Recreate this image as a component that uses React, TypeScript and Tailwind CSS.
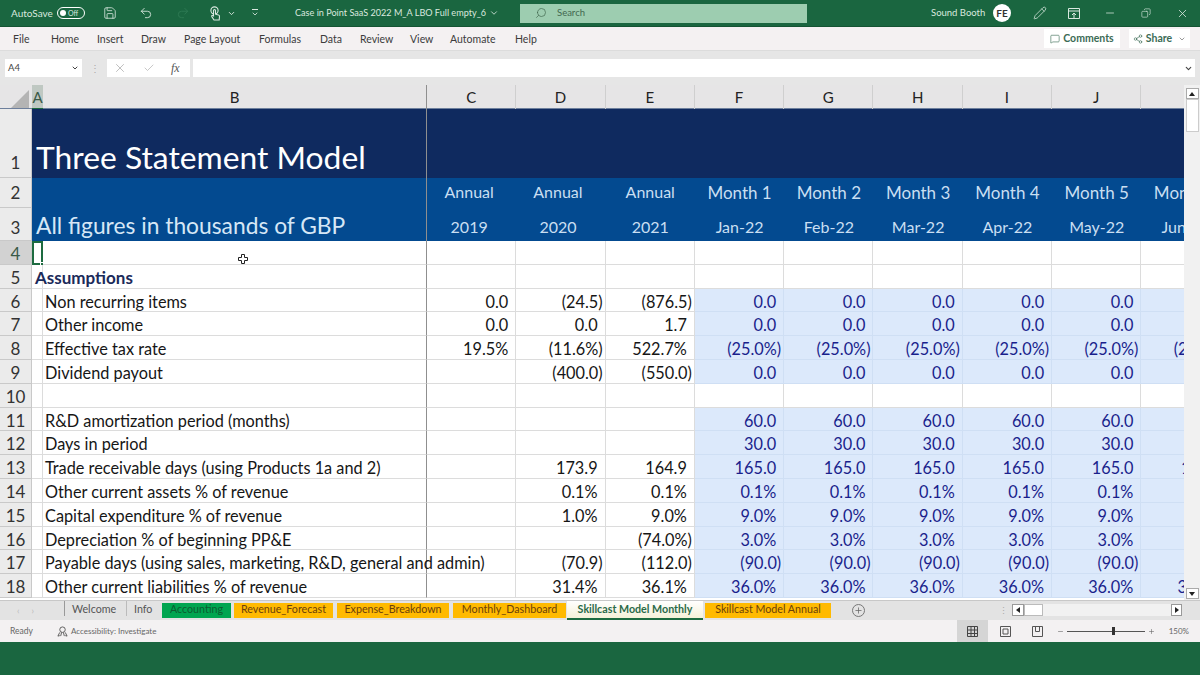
import { ChevronDown, Minus, Plus, Search, Undo2, Redo2, Save, X, Check, Pencil, MessageSquare, Share2, Copy } from "lucide-react";

const font = "font-['Lato','Liberation_Sans',sans-serif]";
const colCls = "grid grid-cols-[32px_11px_384px_repeat(9,89.3px)]";

type RowData = { n: number; label?: string; bold?: boolean; c?: string; d?: string; e?: string; inputs?: string };

const rows: RowData[] = [
  { n: 4 },
  { n: 5, label: "Assumptions", bold: true },
  { n: 6, label: "Non recurring items", c: "0.0", d: "(24.5)", e: "(876.5)", inputs: "0.0" },
  { n: 7, label: "Other income", c: "0.0", d: "0.0", e: "1.7", inputs: "0.0" },
  { n: 8, label: "Effective tax rate", c: "19.5%", d: "(11.6%)", e: "522.7%", inputs: "(25.0%)" },
  { n: 9, label: "Dividend payout", d: "(400.0)", e: "(550.0)", inputs: "0.0" },
  { n: 10 },
  { n: 11, label: "R&D amortization period (months)", inputs: "60.0" },
  { n: 12, label: "Days in period", inputs: "30.0" },
  { n: 13, label: "Trade receivable days (using Products 1a and 2)", d: "173.9", e: "164.9", inputs: "165.0" },
  { n: 14, label: "Other current assets % of revenue", d: "0.1%", e: "0.1%", inputs: "0.1%" },
  { n: 15, label: "Capital expenditure % of revenue", d: "1.0%", e: "9.0%", inputs: "9.0%" },
  { n: 16, label: "Depreciation % of beginning PP&E", e: "(74.0%)", inputs: "3.0%" },
  { n: 17, label: "Payable days (using sales, marketing, R&D, general and admin)", d: "(70.9)", e: "(112.0)", inputs: "(90.0)" },
  { n: 18, label: "Other current liabilities % of revenue", d: "31.4%", e: "36.1%", inputs: "36.0%" },
];

const headCols = ["C", "D", "E", "F", "G", "H", "I", "J"];
const months = ["Month 1", "Month 2", "Month 3", "Month 4", "Month 5", "Month 6"];
const dates = ["Jan-22", "Feb-22", "Mar-22", "Apr-22", "May-22", "Jun-22"];
const annual = [
  { label: "Annual", year: "2019", cls: "pr-[5px]" },
  { label: "Annual", year: "2020", cls: "pr-[6px]" },
  { label: "Annual", year: "2021", cls: "" },
];
const tabs = [
  { name: "Accounting", cls: "bg-[#00a550] text-[#0c5c30] w-[69px]" },
  { name: "Revenue_Forecast", cls: "bg-[#ffba00] text-[#6b3f0a] w-[99px]" },
  { name: "Expense_Breakdown", cls: "bg-[#ffba00] text-[#6b3f0a] w-[112px] ml-px" },
  { name: "Monthly_Dashboard", cls: "bg-[#ffba00] text-[#6b3f0a] w-[113px] ml-px" },
];

function Val({ v }: { v?: string }) {
  if (!v) return null;
  const paren = v.endsWith(")");
  return <span className={paren ? "pr-[2px]" : "pr-[7px]"}>{v}</span>;
}

function Row({ r }: { r: RowData }) {
  const selected = r.n === 4;
  return (
    <div className={`${colCls} h-[23.8px] text-[16.3px] leading-[19.8px] text-[#161616] [&>div]:pt-[3px]`}>
      <div className={`border-r border-b border-[#c9c9c9] text-center text-[17px] ${selected ? "bg-[#d2d2d2] text-[#3a5a48]" : "bg-[#ebebeb] text-[#333]"}`}>{r.n}</div>
      <div className={`relative whitespace-nowrap ${selected ? "border-2 border-[#1d6b40]" : "border-b border-r border-[#dcdcdc]"}`}>
        {r.bold && <span className="block pl-[3px] text-[17px] font-bold text-[#1b2a5a]">{r.label}</span>}
        {selected && <div className="absolute -right-[3px] -bottom-[3px] w-[4px] h-[4px] bg-[#1d6b40] border border-white" />}
      </div>
      <div className="relative border-b border-r border-b-[#dcdcdc] border-r-[#8f8f8f] whitespace-nowrap pl-[2px]">
        {!r.bold && r.label}
        {selected && (
          <svg className="absolute left-[195px] top-[13px] w-[10px] h-[10px]" viewBox="0 0 10 10">
            <path d="M3.5.5h3v3h3v3h-3v3h-3v-3h-3v-3h3z" fill="#fff" stroke="#222" />
          </svg>
        )}
      </div>
      {[r.c, r.d, r.e].map((v, i) => (
        <div key={i} className="border-b border-r border-[#dcdcdc] text-right"><Val v={v} /></div>
      ))}
      {["F", "G", "H", "I", "J", "K"].map((c) => (
        <div key={c} className={`text-right text-[#1a1f8c] ${r.inputs ? "bg-[#dce9fb] border-b border-r border-[#cfdff4]" : "border-b border-r border-[#dcdcdc]"}`}>
          <Val v={r.inputs} />
        </div>
      ))}
    </div>
  );
}

export default function App() {
  return (
    <div className={`${font} w-[1200px] h-[675px] overflow-hidden flex flex-col bg-[#1a6640]`}>
      {/* title bar */}
      <div className="h-[27px] flex items-center bg-[#1a6640] text-[#d9e8df] text-[9.5px] border-b border-[#145433]">
        <span className="ml-[11px] w-[41px] text-[10px] whitespace-nowrap">AutoSave</span>
        <div className="ml-[5px] w-[28px] h-[12px] rounded-full border border-white flex items-center pl-[2px] gap-[2px] text-[7px]">
          <span className="w-[6px] h-[6px] rounded-full bg-white" />Off
        </div>
        <Save className="ml-[18px] w-[14px] h-[14px]" strokeWidth={1.4} />
        <Undo2 className="ml-[22px] w-[14px] h-[14px]" strokeWidth={1.5} />
        <Redo2 className="ml-[23px] w-[14px] h-[14px] text-[#2f7a53]" strokeWidth={1.5} />
        <svg className="ml-[19px] w-[13px] h-[15px]" viewBox="0 0 13 15" fill="none" stroke="currentColor" strokeWidth="1.1">
          <circle cx="5.5" cy="4.5" r="3.6" />
          <path d="M4.5 4.5a1 1 0 0 1 2 0v3.7l3 .8a1.4 1.4 0 0 1 1 1.5l-.3 3.5H5l-2.2-3.4c-.5-.9.6-1.6 1.7-.7z" fill="#1a6640" />
        </svg>
        <ChevronDown className="ml-[5px] w-[9px] h-[9px]" strokeWidth={2.5} />
        <div className="ml-[14px] w-[9px] flex flex-col items-center gap-[1px]">
          <div className="w-[6px] h-px bg-[#d9e8df]" />
          <ChevronDown className="-my-[1px] w-[8px] h-[8px]" strokeWidth={2.5} />
        </div>
        <span className="ml-[36px] w-[192px] text-[9.1px] whitespace-nowrap">Case in Point SaaS 2022 M_A LBO Full empty_6</span>
        <ChevronDown className="ml-[2px] w-[10px] h-[10px]" />
        <div className="ml-[21px] w-[287px] h-[19px] bg-[#9dcdb0] text-[#42684f] flex items-center pl-[15px] gap-[10px]">
          <Search className="w-[12px] h-[12px] -scale-x-100" strokeWidth={1.4} />
          <span>Search</span>
        </div>
        <span className="ml-[124px] w-[54px] whitespace-nowrap">Sound Booth</span>
        <div className="ml-[8px] w-[18px] h-[18px] rounded-full bg-white text-[#333] text-[10px] flex items-center justify-center font-bold">FE</div>
        <Pencil className="ml-[22px] w-[14px] h-[14px]" strokeWidth={1.3} />
        <svg className="ml-[21px] w-[12px] h-[11px]" viewBox="0 0 12 11" fill="none" stroke="currentColor">
          <path d="M.5.5h11v10H.5zM.5 3h11M6 10V5M4 7l2-2 2 2" />
        </svg>
        <Minus className="ml-[24px] w-[12px] h-[12px]" strokeWidth={1.5} />
        <Copy className="ml-[25px] w-[10px] h-[10px] -scale-x-100" strokeWidth={1.5} />
        <X className="ml-[25px] w-[13px] h-[13px]" strokeWidth={1.5} />
      </div>

      {/* ribbon tabs */}
      <div className="h-[24px] flex items-center bg-[#f4f1f2] text-[#3c3c3c] text-[10.5px] border-b border-[#dcdcdc] whitespace-nowrap [&>span]:mt-[2px]">
        <span className="ml-[13px] w-[38px]">File</span>
        <span className="w-[46px]">Home</span>
        <span className="w-[44px]">Insert</span>
        <span className="w-[43px]">Draw</span>
        <span className="w-[75px]">Page Layout</span>
        <span className="w-[61px]">Formulas</span>
        <span className="w-[40px]">Data</span>
        <span className="w-[50px]">Review</span>
        <span className="w-[40px]">View</span>
        <span className="w-[65px]">Automate</span>
        <span>Help</span>
        <div className="ml-auto mr-[10px] flex items-center gap-[9px] font-bold text-[#3b6b55]">
          <div className="w-[76px] h-[19px] bg-white flex items-center justify-center gap-[3px]">
            <MessageSquare className="w-[10px] h-[10px]" strokeWidth={1.5} />Comments
          </div>
          <div className="w-[61px] h-[19px] bg-white flex items-center justify-center gap-[3px]">
            <Share2 className="w-[10px] h-[10px]" strokeWidth={1.5} />Share
            <ChevronDown className="ml-[3px] w-[8px] h-[8px] text-[#666]" />
          </div>
        </div>
      </div>

      {/* formula bar */}
      <div className="h-[34px] flex items-center bg-[#e6e6e6] text-[#444] pl-[5px] pr-[5px]">
        <div className="w-[77px] h-[18px] bg-white flex items-center justify-between px-[3px] text-[9.5px]">
          A4<ChevronDown className="w-[8px] h-[8px]" strokeWidth={3} />
        </div>
        <span className="w-[25px] text-center text-[#aaa] text-[10px]">⋮</span>
        <div className="w-[83px] h-[18px] bg-white flex items-center gap-[16px] pl-[6px] text-[#aaa]">
          <X className="w-[14px] h-[14px]" strokeWidth={1.3} />
          <Check className="w-[12px] h-[12px]" strokeWidth={1.3} />
          <span className="text-[#555] italic text-[12px] font-['Liberation_Serif',serif]">fx</span>
        </div>
        <div className="ml-[3px] flex-1 h-[18px] bg-white flex items-center justify-end pr-[2px]">
          <ChevronDown className="w-[9px] h-[9px]" strokeWidth={3} />
        </div>
      </div>

      {/* sheet */}
      <div className="h-[515px] bg-white flex">
        <div className="w-[1184px] overflow-hidden">
          <div className={`${colCls} h-[23px] bg-[#e6e5e6] text-[15px] leading-[22px] text-[#222] text-center [&>div]:pt-[1px]`}>
            <div className="flex items-end justify-end pr-[3px] pb-[2px]">
              <div className="w-[18px] h-[18px] bg-[#b4b4b4] [clip-path:polygon(100%_0,100%_100%,0_100%)]" />
            </div>
            <div className="bg-[#bfc8c2] border-b-2 border-[#1d6b40] text-[#3a5a48]">A</div>
            <div className="border-r border-[#8f8f8f]">B</div>
            {headCols.map((c) => (
              <div key={c} className="border-r border-[#cfcfcf]">{c}</div>
            ))}
            <div className="border-r border-[#cfcfcf]" />
          </div>

          <div className={`${colCls} h-[70px] border-t border-[#6d7f9c]`}>
            <div className="bg-[#ebebeb] border-r border-b border-[#c9c9c9] text-center text-[17px] text-[#333] flex items-end justify-center pb-[2px]">1</div>
            <div className="col-span-2 bg-[#0f2a5f] border-r border-[#8f8f8f] text-white text-[31.8px] leading-[32px] whitespace-nowrap pl-[4px] pb-[5px] flex items-end">Three Statement Model</div>
            <div className="col-span-9 bg-[#0f2a5f]" />
          </div>

          <div className={`${colCls} h-[30px]`}>
            <div className="bg-[#ebebeb] border-r border-b border-[#c9c9c9] text-center text-[17px] leading-[29px] text-[#333]">2</div>
            <div className="col-span-2 bg-[#034a90] border-r border-[#8f8f8f]" />
            {annual.map((a) => (
              <div key={a.year} className={`bg-[#034a90] text-[#c9dff2] text-[16px] leading-[28px] text-center whitespace-nowrap ${a.cls}`}>{a.label}</div>
            ))}
            {months.map((m) => (
              <div key={m} className="bg-[#034a90] text-[#c9dff2] text-[17px] leading-[29px] text-center whitespace-nowrap">{m}</div>
            ))}
          </div>

          <div className={`${colCls} h-[33px]`}>
            <div className="bg-[#ebebeb] border-r border-b border-[#c9c9c9] text-center text-[17px] leading-[25px] pt-[7px] text-[#333]">3</div>
            <div className="col-span-2 bg-[#034a90] border-r border-[#8f8f8f] text-[#d6e7f6] text-[22.8px] leading-[32px] pt-px whitespace-nowrap pl-[4px]">All figures in thousands of GBP</div>
            {annual.map((a) => (
              <div key={a.year} className={`bg-[#034a90] text-[#c9dff2] text-[16px] leading-[28px] pt-[5px] text-center whitespace-nowrap ${a.cls}`}>{a.year}</div>
            ))}
            {dates.map((m) => (
              <div key={m} className="bg-[#034a90] text-[#c9dff2] text-[16px] leading-[28px] pt-[5px] text-center whitespace-nowrap">{m}</div>
            ))}
          </div>

          {rows.map((r) => <Row key={r.n} r={r} />)}
        </div>

        {/* vertical scrollbar */}
        <div className="w-[16px] bg-[#f1f1f1] flex flex-col items-center pt-[3px] pb-[1px]">
          <div className="w-[13px] h-[11px] bg-white border border-[#aaa] flex items-center justify-center">
            <div className="w-0 h-0 border-x-[3px] border-x-transparent border-b-[4px] border-b-[#222]" />
          </div>
          <div className="w-[13px] h-[33px] bg-white border border-[#ccc]" />
          <div className="flex-1" />
          <div className="w-[13px] h-[11px] bg-white border border-[#aaa] flex items-center justify-center">
            <div className="w-0 h-0 border-x-[3px] border-x-transparent border-t-[4px] border-t-[#222]" />
          </div>
        </div>
      </div>

      {/* sheet tabs */}
      <div className="h-[20px] flex items-start bg-[#e3e3e3] text-[10.7px] leading-[15px] border-t border-[#c8c8c8] whitespace-nowrap">
        <div className="w-[64px] h-full flex items-center gap-[12px] pl-[17px] text-[#bbb] text-[9px]"><span>‹</span><span>›</span></div>
        <span className="w-[62px] border-l border-[#999] pl-[7px] text-[#555]">Welcome</span>
        <span className="w-[36px] border-l border-[#bbb] pl-[7px] text-[#555]">Info</span>
        <div className="flex gap-[3px] mt-[2px]">
          {tabs.map((t) => (
            <div key={t.name} className={`${t.cls} h-[15px] leading-[12px] text-center`}>{t.name}</div>
          ))}
        </div>
        <div className="ml-px w-[136px] h-[19px] bg-gradient-to-b from-white to-[#f6f1d8] border-b-2 border-[#1d6b40] text-center font-bold text-[#2a6a48]">Skillcast Model Monthly</div>
        <div className="bg-[#ffba00] text-[#6b3f0a] w-[126px] h-[15px] leading-[12px] mt-[2px] ml-[2px] text-center">Skillcast Model Annual</div>
        <div className="ml-[21px] mt-[3px] w-[13px] h-[13px] rounded-full border border-[#777] flex items-center justify-center">
          <Plus className="w-[9px] h-[9px] text-[#666]" />
        </div>
        <div className="ml-[134px] mt-[4px] w-[13px] text-[#aaa] text-[9px] leading-[12px]">⋮</div>
        <div className="mt-[3px] w-[12px] h-[12px] bg-white border border-[#999] flex items-center">
          <div className="w-0 h-0 ml-[3px] border-y-[3px] border-y-transparent border-r-[4px] border-r-[#222]" />
        </div>
        <div className="mt-[3px] w-[19px] h-[12px] bg-white border border-[#bbb]" />
        <div className="flex-1 mt-[3px] h-[12px] bg-[#f1f1f1]" />
        <div className="mt-[3px] mr-[18px] w-[11px] h-[12px] bg-white border border-[#999] flex items-center justify-center">
          <div className="w-0 h-0 border-y-[3px] border-y-transparent border-l-[4px] border-l-[#222]" />
        </div>
      </div>

      {/* status bar */}
      <div className="h-[22px] flex items-center bg-[#f3f1f2] text-[#666] text-[8px] whitespace-nowrap">
        <span className="ml-[10px] text-[8.5px]">Ready</span>
        <svg className="ml-[24px] w-[11px] h-[11px]" viewBox="0 0 12 12" fill="none" stroke="#555" strokeWidth="1">
          <circle cx="6" cy="4" r="3" />
          <path d="M3 7l-2 4 2-.5M9 7l2 4-2-.5M5 7l-1 4M7 7l1 4" />
        </svg>
        <span className="ml-[3px]">Accessibility: Investigate</span>
        <div className="ml-auto w-[31px] h-[22px] bg-[#d5d5d5] flex items-center justify-center">
          <svg className="w-[11px] h-[11px]" viewBox="0 0 11 11" fill="none" stroke="#444"><path d="M.5.5h10v10H.5zM.5 4h10M.5 7.5h10M4 .5v10M7.5.5v10" /></svg>
        </div>
        <svg className="ml-[12px] w-[11px] h-[11px]" viewBox="0 0 11 11" fill="none" stroke="#555"><path d="M.5.5h10v10H.5zM3 3h5v5H3z" /></svg>
        <svg className="ml-[21px] w-[11px] h-[11px]" viewBox="0 0 11 11" fill="none" stroke="#555"><path d="M.5.5h10v10H.5zM3.5.5v5h4v-5" /></svg>
        <Minus className="ml-[14px] w-[7px] h-[7px]" />
        <div className="ml-[3px] w-[78px] h-px bg-[#555] relative">
          <div className="absolute left-[45px] -top-[3.5px] w-[3px] h-[8px] bg-[#333]" />
        </div>
        <Plus className="ml-[3px] w-[7px] h-[7px]" />
        <span className="ml-[14px] mr-[11px]">150%</span>
      </div>

      <div className="flex-1 bg-[#1a6640]" />
    </div>
  );
}
